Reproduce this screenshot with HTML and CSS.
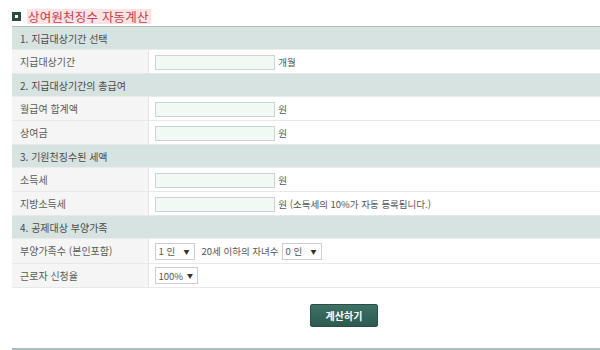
FILE: index.html
```html
<!DOCTYPE html>
<html lang="ko">
<head>
<meta charset="utf-8">
<link rel="stylesheet" href="styles.css">
</head>
<body>
<div class="page">
  <h2 class="title"><span class="sq"></span><span class="title-text">상여원천징수 자동계산</span></h2>
  <table class="calc">
    <colgroup><col class="c-label"><col></colgroup>
    <tr class="sec"><td colspan="2">1. 지급대상기간 선택</td></tr>
    <tr><th>지급대상기간</th><td><input class="inp" type="text"> <span class="unit">개월</span></td></tr>
    <tr class="sec"><td colspan="2">2. 지급대상기간의 총급여</td></tr>
    <tr><th>월급여 합계액</th><td><input class="inp" type="text"> <span class="unit">원</span></td></tr>
    <tr><th>상여금</th><td><input class="inp" type="text"> <span class="unit">원</span></td></tr>
    <tr class="sec"><td colspan="2">3. 기원천징수된 세액</td></tr>
    <tr><th>소득세</th><td><input class="inp" type="text"> <span class="unit">원</span></td></tr>
    <tr><th>지방소득세</th><td><input class="inp" type="text"> <span class="unit">원 (소득세의 10%가 자동 등록됩니다.)</span></td></tr>
    <tr class="sec"><td colspan="2">4. 공제대상 부양가족</td></tr>
    <tr class="tall"><th>부양가족수 (본인포함)</th><td><span class="sel">1 인<i>▼</i></span><span class="unit mid">20세 이하의 자녀수</span><span class="sel">0 인<i>▼</i></span></td></tr>
    <tr class="tall"><th>근로자 신청율</th><td><span class="sel">100%<i>▼</i></span></td></tr>
  </table>
  <div class="actions"><button class="btn" type="button">계산하기</button></div>
  <div class="endline"></div>
</div>
</body>
</html>
```
FILE: styles.css
```css
* { box-sizing: border-box; }
html, body { margin: 0; padding: 0; background: #fff; }
body { font-family: "Noto Sans CJK KR", "Noto Sans", sans-serif; font-size: 10px; color: #555; width: 600px; overflow: hidden; }
.page { padding: 6px 0 0 12px; width: 612px; }
.title { margin: 0; height: 20px; display: flex; align-items: center; font-size: 12.5px; font-weight: normal; line-height: 15px; }
.sq { width: 9px; height: 9px; background: #2d4a3e; margin-right: 6px; display: inline-block; position: relative; }
.sq::after { content: ""; position: absolute; left: 3px; top: 3px; width: 3px; height: 3px; background: #fff; }
.title-text { background: #fde3e3; color: #c0404c; padding: 0 2px 0 1px; letter-spacing: 0.2px; }
.calc { width: 600px; border-collapse: collapse; border-top: 1px solid #aebfb8; margin-top: 0; border-bottom: 1px solid #d6dcda; }
.c-label { width: 136px; }
.calc td, .calc th { padding: 0; height: 24px; border-bottom: 1px solid #e6e9e8; vertical-align: middle; font-weight: normal; text-align: left; }
.calc th { background: #f4f5f4; padding-left: 8px; color: #5a5a5a; border-right: 1px solid #e3e6e5; }
.calc td { padding-left: 6px; }
.calc tr.sec td { background: #d7e3e0; padding-left: 8px; color: #4a4a4a; height: 23px; border-bottom: 1px solid #e8ecea; }
.calc tr.tall th, .calc tr.tall td { height: 24.5px; }
.inp { width: 120px; height: 15px; border: 1px solid #cdd3d0; background: #f1f9f4; padding: 0; margin: 0; vertical-align: middle; font: inherit; }
.unit { margin-left: 1px; vertical-align: middle; color: #555; font-size: 9.5px; }
.unit.mid { margin: 0 3px 0 7px; }
.sel { display: inline-flex; align-items: center; justify-content: space-between; min-width: 40px; height: 17px; border: 1px solid #c9cfcc; background: #fff; padding: 0 4px 0 3px; vertical-align: middle; font-size: 9.5px; color: #555; gap: 4px; }
.sel i { font-style: normal; font-size: 6px; color: #333; }
.actions { display: flex; padding: 16px 0 0 298px; height: 60px; width: 588px; }
.btn { width: 68px; height: 23px; border: 1px solid #284e46; border-radius: 2px; background: linear-gradient(#3f7167, #2b5a50); color: #fff; font: bold 10px "Noto Sans CJK KR", sans-serif; padding: 0; margin-left: 0; }
.endline { height: 2px; background: #a9bcc0; width: 588px; }
```
